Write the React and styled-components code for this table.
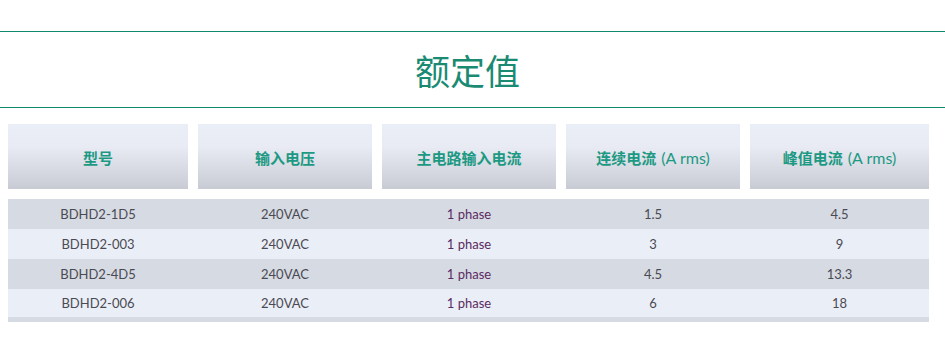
import React from "react";
import styled, { createGlobalStyle } from "styled-components";

const GlobalStyle = createGlobalStyle`
  body {
    margin: 0;
    background: #ffffff;
    font-family: "Lato", "Noto Sans", "Noto Sans CJK SC", sans-serif;
  }
`;

const Page = styled.div`
  width: 945px;
  padding-top: 31px;
`;

const TitleBar = styled.div`
  border-top: 1px solid #0f8a6e;
  border-bottom: 1px solid #0f8a6e;
  height: 75px;
  display: flex;
  align-items: center;
  justify-content: center;
`;

const Title = styled.h2`
  margin: 0;
  padding-right: 10px;
  font-family: "Noto Sans CJK SC", sans-serif;
  font-weight: 400;
  font-size: 35px;
  color: #1a8a73;
`;

const TableWrap = styled.div`
  width: 921px;
  margin: 16px 0 0 8px;
`;

const columns = "180px 174px 174px 174px 179px";

const HeadRow = styled.div`
  display: grid;
  grid-template-columns: ${columns};
  column-gap: 10px;
`;

const HeadCell = styled.div`
  height: 65px;
  display: flex;
  align-items: center;
  justify-content: center;
  background: linear-gradient(to bottom, #eaeef7 0%, #e8ebf3 35%, #c8cbd3 100%);
  font-family: "Noto Sans CJK SC", sans-serif;
  font-weight: 700;
  font-size: 15px;
  color: #1c9983;
  padding-top: 2px;
  box-sizing: border-box;
`;

const Latin = styled.span`
  font-family: "Lato", sans-serif;
  font-weight: 400;
  font-size: 16px;
  margin-left: 5px;
`;

const Body = styled.div`
  margin-top: 10px;
  border-bottom: 5px solid #d6dae3;
`;

const Row = styled.div`
  display: grid;
  grid-template-columns: ${columns};
  column-gap: 10px;
  height: 30px;
  background: ${(p) => (p.$odd ? "#eaeef7" : "#d6dae3")};
  &:last-child {
    height: 28px;
  }
`;

const Cell = styled.div`
  display: flex;
  align-items: center;
  justify-content: center;
  font-size: 13px;
  font-weight: 400;
  color: ${(p) => (p.$accent ? "#5b2a62" : "#4a4a52")};
`;

const heads = [
  ["型号"],
  ["输入电压"],
  ["主电路输入电流"],
  ["连续电流", "(A rms)"],
  ["峰值电流", "(A rms)"],
];

const rows = [
  ["BDHD2-1D5", "240VAC", "1 phase", "1.5", "4.5"],
  ["BDHD2-003", "240VAC", "1 phase", "3", "9"],
  ["BDHD2-4D5", "240VAC", "1 phase", "4.5", "13.3"],
  ["BDHD2-006", "240VAC", "1 phase", "6", "18"],
];

const App = () => {
  return (
    <Page>
      <GlobalStyle />
      <TitleBar>
        <Title>额定值</Title>
      </TitleBar>
      <TableWrap>
        <HeadRow>
          {heads.map(([zh, en]) => (
            <HeadCell key={zh}>
              {zh}
              {en && <Latin>{en}</Latin>}
            </HeadCell>
          ))}
        </HeadRow>
        <Body>
          {rows.map((row, i) => (
            <Row key={row[0]} $odd={i % 2 === 1}>
              {row.map((val, j) => (
                <Cell key={j} $accent={j === 2}>
                  {val}
                </Cell>
              ))}
            </Row>
          ))}
        </Body>
      </TableWrap>
    </Page>
  );
};

export default App;
